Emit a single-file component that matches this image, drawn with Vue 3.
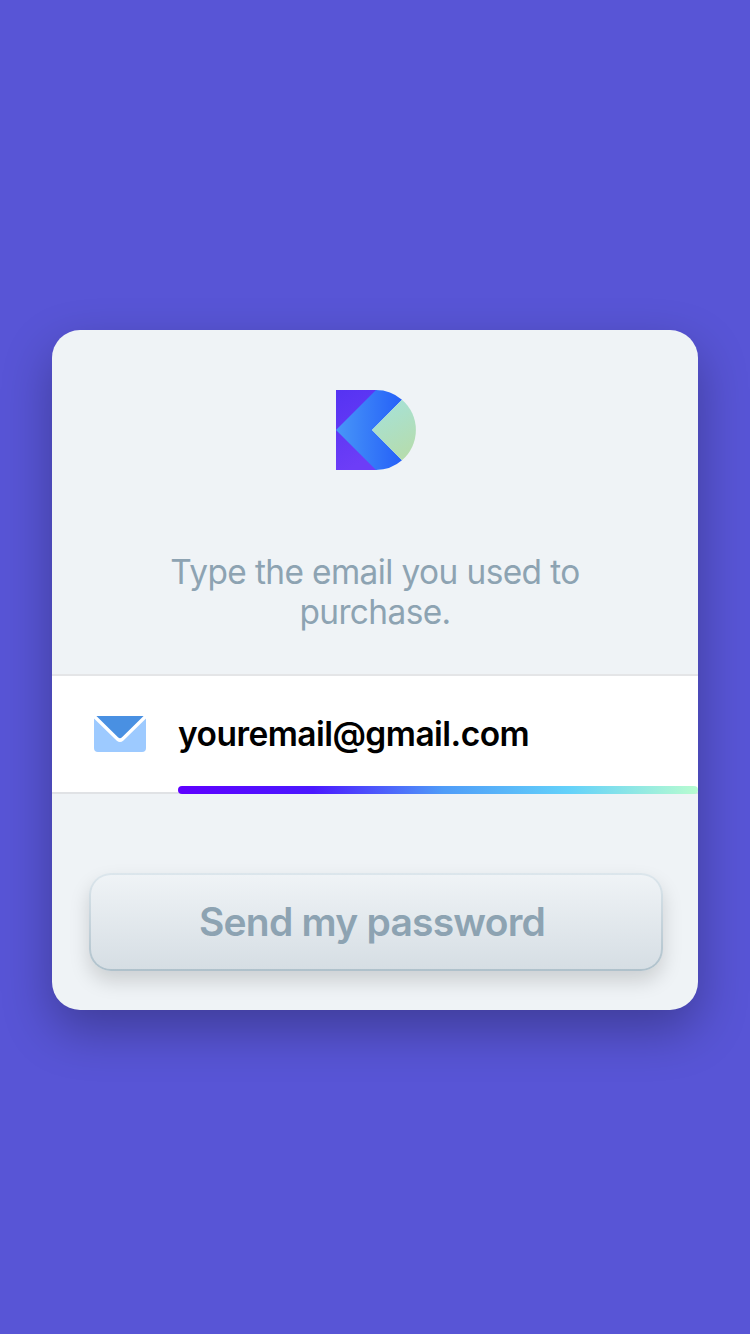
<script setup>
import { ref } from 'vue'

const email = ref('youremail@gmail.com')
</script>

<template>
  <main class="screen">
    <form class="card" @submit.prevent>
      <svg class="logo" viewBox="0 0 80 80" aria-hidden="true">
        <defs>
          <linearGradient id="violet" x1="0" y1="0" x2="0.3" y2="1">
            <stop offset="0" stop-color="#5533f2" />
            <stop offset="1" stop-color="#6d3df7" />
          </linearGradient>
          <linearGradient id="blue" x1="0" y1="0" x2="1" y2="0">
            <stop offset="0" stop-color="#4897f8" />
            <stop offset="1" stop-color="#2560f8" />
          </linearGradient>
          <linearGradient id="mint" x1="0.3" y1="0" x2="0.7" y2="1">
            <stop offset="0" stop-color="#a6e2d8" />
            <stop offset="1" stop-color="#b6dcac" />
          </linearGradient>
        </defs>
        <path d="M0 0H41L20 40L41 80H0Z" fill="url(#violet)" />
        <path d="M0 40L40 0A40 40 0 0 1 66 9.7L36 40L66 70.3A40 40 0 0 1 40 80Z" fill="url(#blue)" />
        <path d="M36 40L66 9.7A40 40 0 0 1 66 70.3Z" fill="url(#mint)" />
      </svg>

      <p class="hint">Type the email you used to<br />purchase.</p>

      <div class="field">
        <svg class="mail" viewBox="0 0 52 36" aria-hidden="true">
          <path d="M0 2.5L22.8 24.7Q26 27.5 29.2 24.7L52 2.5V32Q52 36 48 36H4Q0 36 0 32Z" fill="#9dcaff" />
          <path d="M2.4 0H49.6L28 21.2Q26 23.2 24 21.2Z" fill="#4990e2" />
        </svg>
        <div class="entry">
          <span class="value">{{ email }}</span>
          <i class="bar"></i>
        </div>
      </div>

      <button class="send" type="submit"><span class="label">Send my password</span></button>
    </form>
  </main>
</template>

<style>
body {
  margin: 0;
  background: #5855d6;
}
</style>

<style scoped>
.screen {
  box-sizing: border-box;
  height: 1334px;
  padding: 330px 52px 0;
  background: #5855d6;
  font-family: Inter, "Liberation Sans", sans-serif;
  overflow: hidden;
}

.card {
  box-sizing: border-box;
  display: flex;
  flex-direction: column;
  align-items: center;
  width: 646px;
  height: 680px;
  padding-top: 60px;
  border-radius: 28px;
  background: #eff3f6;
  box-shadow: 0 20px 50px rgba(0, 0, 0, 0.29);
}

.logo {
  width: 80px;
  height: 80px;
  margin-left: 2px;
}

.hint {
  margin: 82px 0 0;
  color: #8da3b2;
  font-size: 33.4px;
  line-height: 40px;
  letter-spacing: -0.59px;
  text-align: center;
  white-space: nowrap;
}

.field {
  box-sizing: border-box;
  display: flex;
  align-items: center;
  width: 100%;
  height: 120px;
  margin-top: 42px;
  padding-left: 42px;
  border-top: 2px solid #e4e5e7;
  border-bottom: 2px solid #e0e2e5;
  background: #fff;
}

.mail {
  width: 52px;
  height: 36px;
}

.entry {
  display: flex;
  flex: 1;
  flex-direction: column;
  justify-content: space-between;
  height: 120px;
  margin-left: 32px;
}

.value {
  padding-top: 40px;
  color: #000;
  font-size: 33.5px;
  font-weight: 560;
  line-height: 40px;
  letter-spacing: -0.54px;
  white-space: nowrap;
}

.bar {
  height: 8px;
  border-radius: 4px;
  background: linear-gradient(90deg, #5f00ff 0%, #4a18ff 26%, #4f9cf8 51%, #63d1fa 75%, #b8fcd0 100%);
}

.send {
  box-sizing: border-box;
  width: 574px;
  height: 98px;
  margin: 79px 0 0 2px;
  padding: 0;
  border: 2px solid transparent;
  border-radius: 22px;
  background:
    linear-gradient(#eff3f6, #d6dee4) padding-box,
    linear-gradient(#dce6ec, #afc1cb) border-box;
  box-shadow: 0 10px 20px rgba(0, 0, 0, 0.15);
  color: #8da3b2;
  font-family: inherit;
  font-size: 39px;
  font-weight: 600;
  line-height: 48px;
  letter-spacing: -0.77px;
}

.label {
  position: relative;
  left: -4px;
}
</style>
